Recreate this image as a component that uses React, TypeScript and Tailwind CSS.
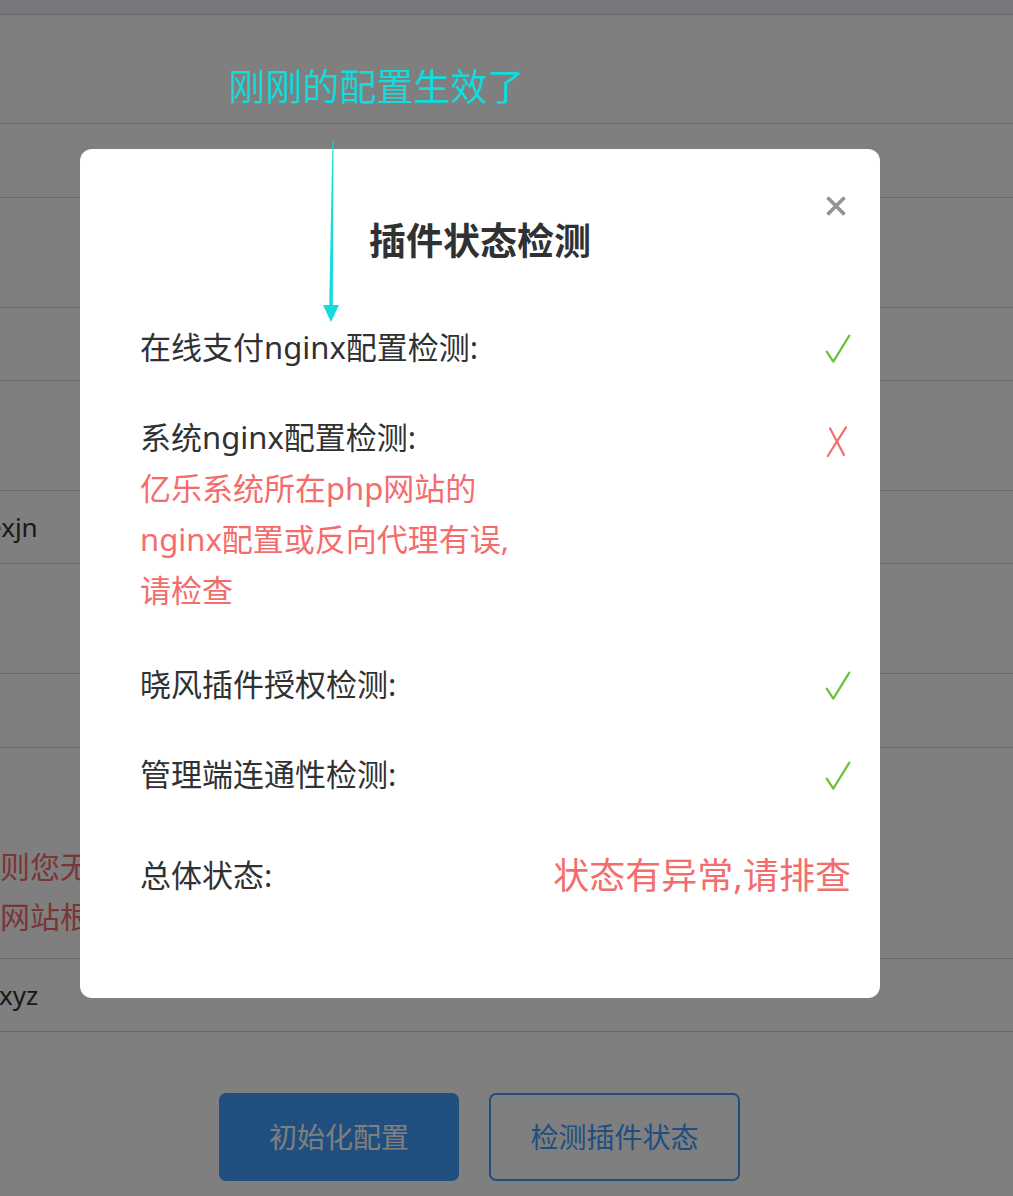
import React from "react";

const rowHeights = [109, 74, 110, 73, 110, 73, 110, 74, 211, 73];

function CheckMark() {
  return (
    <svg width="26" height="30" viewBox="0 0 26 30" fill="none">
      <polyline points="1.7,18.7 8.3,28.7 24.3,2.7" stroke="#67c23a" strokeWidth="2.2" strokeLinecap="round" strokeLinejoin="round" />
    </svg>
  );
}

function CrossMark() {
  return (
    <svg width="26" height="34" viewBox="0 0 26 34" fill="none">
      <line x1="5" y1="3.3" x2="19" y2="30" stroke="#f56c6c" strokeWidth="2.2" strokeLinecap="round" />
      <line x1="21" y1="2.3" x2="2.7" y2="31" stroke="#f56c6c" strokeWidth="2.2" strokeLinecap="round" />
    </svg>
  );
}

function BackgroundRow({ index }: { index: number }) {
  const h = rowHeights[index];
  if (index === 5) {
    return (
      <div className="flex items-center border-t border-[#d2d2d2] text-[26px] text-[#333]" style={{ height: h }}>
        <span className="-ml-[13px]">exjn</span>
      </div>
    );
  }
  if (index === 8) {
    return (
      <div className="border-t border-[#d2d2d2] pt-[94px] text-[30px] leading-[50px] text-[#f56c6c]" style={{ height: h }}>
        <div>则您无法访问</div>
        <div>网站根目录</div>
      </div>
    );
  }
  if (index === 9) {
    return (
      <div className="flex items-center border-t border-[#d2d2d2] text-[26px] text-[#333]" style={{ height: h }}>
        <span className="-ml-[1px]">xyz</span>
      </div>
    );
  }
  return <div className="border-t border-[#d2d2d2]" style={{ height: h }} />;
}

export default function App() {
  return (
    <div className="relative min-h-[1196px] w-full overflow-hidden bg-white font-['Noto_Sans','Noto_Sans_CJK_SC',sans-serif]">
      {/* page behind the dialog */}
      <div className="h-[14px] bg-[#eef0f6]" />
      {rowHeights.map((_, i) => (
        <BackgroundRow key={i} index={i} />
      ))}
      <div className="border-t border-[#d2d2d2]" />
      <div className="flex gap-[30px] pl-[219px] pt-[61px]">
        <button className="flex h-[88px] w-[240px] items-center justify-center rounded-[7px] bg-[#409eff] text-[28px] text-white">
          初始化配置
        </button>
        <button className="flex h-[88px] w-[251px] items-center justify-center rounded-[7px] border-2 border-[#409eff] bg-white text-[28px] text-[#409eff]">
          检测插件状态
        </button>
      </div>

      {/* mask */}
      <div className="fixed inset-0 bg-black/50" />

      {/* dialog */}
      <div className="fixed inset-0">
        <div className="relative ml-[80px] mt-[149px] w-[800px] rounded-[12px] bg-white pb-[97px] pl-[60px] pr-[29px] pt-[67px] text-[31px] leading-[51px] text-[#303133]">
          <button className="absolute right-[34px] top-[47px]">
            <svg width="20" height="20" viewBox="0 0 20 20" fill="none">
              <path d="M1.5 1.5 L18.5 18.5 M18.5 1.5 L1.5 18.5" stroke="#909399" strokeWidth="3.6" />
            </svg>
          </button>
          <div className="-ml-[31px] text-center text-[37px] font-bold leading-[50px]">插件状态检测</div>

          <div className="mt-[56px] flex items-center justify-between">
            <span>在线支付nginx配置检测:</span>
            <CheckMark />
          </div>

          <div className="mt-[39px] flex items-start justify-between">
            <div>
              <div>系统nginx配置检测:</div>
              <div className="text-[#f56c6c]">
                <div>亿乐系统所在php网站的</div>
                <div>nginx配置或反向代理有误,</div>
                <div>请检查</div>
              </div>
            </div>
            <div className="mt-[13px]">
              <CrossMark />
            </div>
          </div>

          <div className="mt-[43px] flex items-center justify-between">
            <span>晓风插件授权检测:</span>
            <CheckMark />
          </div>

          <div className="mt-[39px] flex items-center justify-between">
            <span>管理端连通性检测:</span>
            <CheckMark />
          </div>

          <div className="mt-[50px] flex items-center justify-between">
            <span>总体状态:</span>
            <span className="text-[36px] text-[#f56c6c]">状态有异常,请排查</span>
          </div>
        </div>
      </div>

      {/* annotation */}
      <div className="absolute left-[228px] top-[68px] text-[37px] leading-[37px] text-[#14dbdc]">刚刚的配置生效了</div>
      <svg className="absolute left-[318px] top-[138px]" width="28" height="188" viewBox="0 0 28 188">
        <polygon points="14.5,3 15.5,3 14.8,168 11.2,168" fill="#14dbdc" />
        <polygon points="5,167 21,167 13,184" fill="#14dbdc" />
      </svg>
    </div>
  );
}
